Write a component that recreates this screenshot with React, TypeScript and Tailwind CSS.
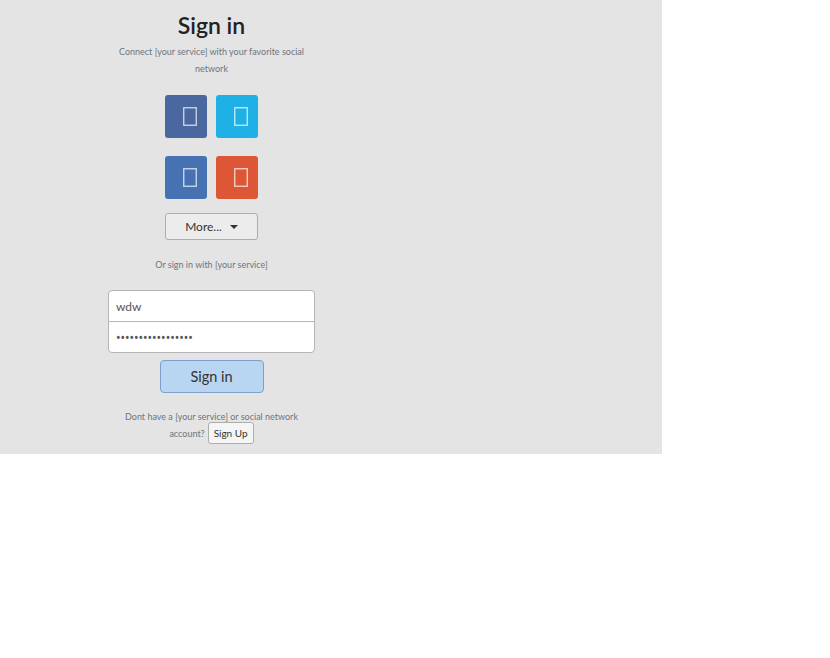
import React from 'react'

function Tofu() {
  return (
    <svg width="14" height="19" viewBox="0 0 14 19" fill="none">
      <rect x="0.75" y="0.75" width="12.5" height="17.5" stroke="rgba(255,255,255,0.75)" strokeWidth="1.3" />
    </svg>
  )
}

function SocialButton({ color }: { color: string }) {
  return (
    <button className={`w-[42px] h-[43px] rounded-[3px] flex items-center justify-center pl-2 ${color}`}>
      <Tofu />
    </button>
  )
}

export default function App() {
  return (
    <div className="w-[830px] h-[658px] bg-white" style={{ fontFamily: 'Lato, "Open Sans", sans-serif' }}>
      <div className="w-[662px] h-[454px] bg-[#e4e4e4]">
        <div className="w-[207px] ml-[108px] flex flex-col items-center">
          {/* header */}
          <h1 className="mt-[8px] text-[23px] leading-[34px] font-semibold text-[#222]">Sign in</h1>
          <p className="mt-[1px] w-[200px] text-center text-[9px] leading-[17px] text-[#6c757d]">
            Connect [your service] with your favorite social
            <br />
            network
          </p>

          {/* social */}
          <div className="mt-[18px] grid grid-cols-2 gap-x-[9px] gap-y-[18px]">
            <SocialButton color="bg-[#4a67a0]" />
            <SocialButton color="bg-[#1fb1e6]" />
            <SocialButton color="bg-[#4672b3]" />
            <SocialButton color="bg-[#dd5636]" />
          </div>

          <button className="mt-[14px] w-[93px] h-[27px] rounded-[3px] border border-[#adadad] bg-[#ececec] flex items-center justify-center gap-[8px] text-[12px] text-[#333]">
            More...
            <span className="w-0 h-0 border-l-[4px] border-r-[4px] border-t-[4px] border-l-transparent border-r-transparent border-t-[#333]" />
          </button>

          <p className="mt-[18px] text-[9px] leading-[14px] text-[#6c757d]">Or sign in with [your service]</p>

          {/* form */}
          <div className="mt-[18px] w-[207px] flex flex-col">
            <input
              defaultValue="wdw"
              className="h-[32px] px-[7px] bg-white border border-[#b5b5b5] rounded-t-[4px] text-[12px] text-[#555] outline-none"
            />
            <input
              type="password"
              defaultValue="wdwdwdwdwdwdwdwdw"
              className="h-[32px] -mt-px px-[7px] bg-white border border-[#b5b5b5] rounded-b-[4px] text-[12px] text-[#555] outline-none font-['Noto_Sans',sans-serif]"
            />
          </div>

          <button className="mt-[7px] w-[104px] h-[33px] rounded-[4px] border border-[#7fa0cc] bg-[#b8d6f2] text-[14.5px] text-[#333]">
            Sign in
          </button>

          <div className="mt-[18px] flex flex-col items-center text-[9px] text-[#6c757d]">
            <p className="leading-[12px]">Dont have a [your service] or social network</p>
            <div className="-mt-[1px] flex items-center gap-[3px]">
              <span className="pt-[1px]">account?</span>
              <button className="h-[22px] px-[5px] rounded-[3px] border border-[#adadad] bg-[#f5f5f5] text-[10px] text-[#333]">
                Sign Up
              </button>
            </div>
          </div>
        </div>
      </div>
    </div>
  )
}
